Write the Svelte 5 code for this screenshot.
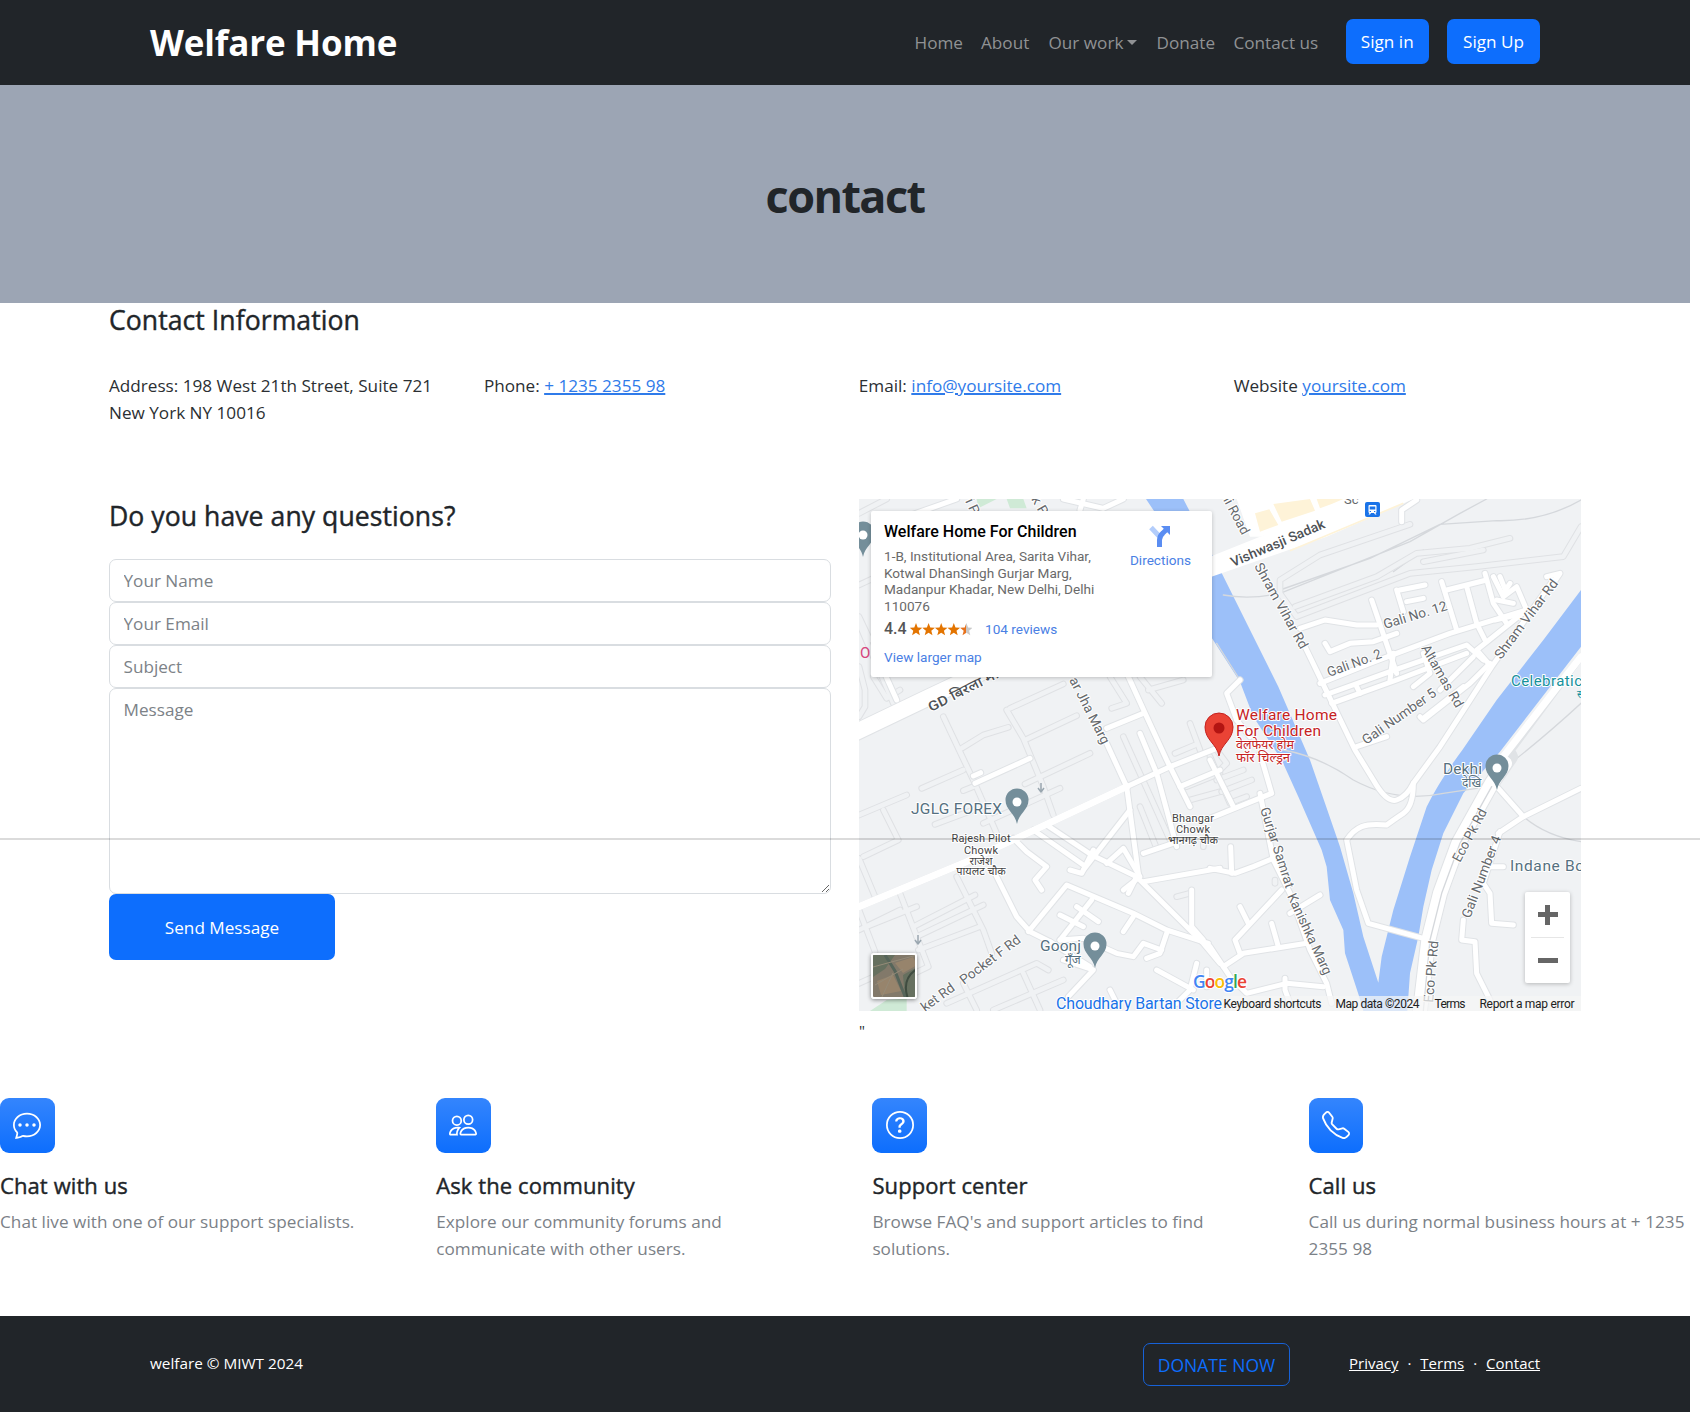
<script>
  const contacts = [
    { label: 'Address:', text: '198 West 21th Street, Suite 721 New York NY 10016' },
    { label: 'Phone:', link: '+ 1235 2355 98' },
    { label: 'Email:', link: 'info@yoursite.com' },
    { label: 'Website', link: 'yoursite.com' }
  ];

  const features = [
    {
      title: 'Chat with us',
      text: 'Chat live with one of our support specialists.',
      paths: [
        'M5 8a1 1 0 1 1-2 0 1 1 0 0 1 2 0zm4 0a1 1 0 1 1-2 0 1 1 0 0 1 2 0zm3 1a1 1 0 1 0 0-2 1 1 0 0 0 0 2z',
        'M2.165 15.803l.02-.004c1.83-.363 2.948-.842 3.468-1.105A9.06 9.06 0 0 0 8 15c4.418 0 8-3.134 8-7s-3.582-7-8-7-8 3.134-8 7c0 1.76.743 3.37 1.97 4.6a10.437 10.437 0 0 1-.524 2.318l-.003.011a10.722 10.722 0 0 1-.244.637c-.079.186.074.394.273.362a21.673 21.673 0 0 0 .693-.125zm.8-3.108a1 1 0 0 0-.287-.801C1.618 10.83 1 9.468 1 8c0-3.192 3.004-6 7-6s7 2.808 7 6c0 3.193-3.004 6-7 6a8.06 8.06 0 0 1-2.088-.272 1 1 0 0 0-.711.074c-.387.196-1.24.57-2.634.893a10.97 10.97 0 0 0 .398-2z'
      ]
    },
    {
      title: 'Ask the community',
      text: 'Explore our community forums and communicate with other users.',
      paths: [
        'M15 14s1 0 1-1-1-4-5-4-5 3-5 4 1 1 1 1h8zm-7.978-1A.261.261 0 0 1 7 12.996c.001-.264.167-1.03.76-1.72C8.312 10.629 9.282 10 11 10c1.717 0 2.687.63 3.24 1.276.593.69.758 1.457.76 1.72l-.008.002A.274.274 0 0 1 15 13H7.022zM11 7a2 2 0 1 0 0-4 2 2 0 0 0 0 4zm3-2a3 3 0 1 1-6 0 3 3 0 0 1 6 0zM6.936 9.28a5.88 5.88 0 0 0-1.23-.247A7.35 7.35 0 0 0 5 9c-4 0-5 3-5 4 0 .667.333 1 1 1h4.216A2.238 2.238 0 0 1 5 13c0-1.01.377-2.042 1.09-2.904.243-.294.526-.569.846-.816zM4.92 10A5.493 5.493 0 0 0 4 13H1c0-.26.164-1.03.76-1.724.545-.636 1.492-1.256 3.16-1.275zM1.5 5.5a3 3 0 1 1 6 0 3 3 0 0 1-6 0zm3-2a2 2 0 1 0 0 4 2 2 0 0 0 0-4z'
      ]
    },
    {
      title: 'Support center',
      text: "Browse FAQ's and support articles to find solutions.",
      paths: [
        'M8 15A7 7 0 1 1 8 1a7 7 0 0 1 0 14zm0 1A8 8 0 1 0 8 0a8 8 0 0 0 0 16z',
        'M5.255 5.786a.237.237 0 0 0 .241.247h.825c.138 0 .248-.113.266-.25.09-.656.54-1.134 1.342-1.134.686 0 1.314.343 1.314 1.168 0 .635-.374.927-.965 1.371-.673.489-1.206 1.06-1.168 1.987l.003.217a.25.25 0 0 0 .25.246h.811a.25.25 0 0 0 .25-.25v-.105c0-.718.273-.927 1.01-1.486.609-.463 1.244-.977 1.244-2.056 0-1.511-1.276-2.241-2.673-2.241-1.267 0-2.655.59-2.75 2.286zm1.557 5.763c0 .533.425.927 1.01.927.609 0 1.028-.394 1.028-.927 0-.552-.42-.94-1.029-.94-.584 0-1.009.388-1.009.94z'
      ]
    },
    {
      title: 'Call us',
      text: 'Call us during normal business hours at + 1235 2355 98',
      paths: [
        'M3.654 1.328a.678.678 0 0 0-1.015-.063L1.605 2.3c-.483.484-.661 1.169-.45 1.77a17.568 17.568 0 0 0 4.168 6.608 17.569 17.569 0 0 0 6.608 4.168c.601.211 1.286.033 1.77-.45l1.034-1.034a.678.678 0 0 0-.063-1.015l-2.307-1.794a.678.678 0 0 0-.58-.122l-2.19.547a1.745 1.745 0 0 1-1.657-.459L5.482 8.062a1.745 1.745 0 0 1-.46-1.657l.548-2.19a.678.678 0 0 0-.122-.58L3.654 1.328zM1.884.511a1.745 1.745 0 0 1 2.612.163L6.29 2.98c.329.423.445.974.315 1.494l-.547 2.19a.678.678 0 0 0 .178.643l2.457 2.457a.678.678 0 0 0 .644.178l2.189-.547a1.745 1.745 0 0 1 1.494.315l2.306 1.794c.829.645.905 1.87.163 2.611l-1.034 1.034c-.74.74-1.846 1.065-2.877.702a18.634 18.634 0 0 1-7.01-4.42 18.634 18.634 0 0 1-4.42-7.009c-.362-1.03-.037-2.137.703-2.877L1.885.511z'
      ]
    }
  ];

  // Map geometry is in thirds of a pixel; the west and east halves have their own origins.
  const west = 'translate(-9 -9) scale(.33333)';
  const east = 'translate(351 -9) scale(.33333)';

  const lanesWest = [
    'M27 70L110 27', 'M27 130L62 115', 'M27 285L70 265', 'M27 380L60 450', 'M27 400L130 640', 'M70 560L110 625L150 600', 'M27 530L45 600V650L27 680',
    'M280 680L370 870L440 1030', 'M335 775L400 735L475 712', 'M480 655L640 582', 'M470 660L520 745L580 890L610 975', 'M525 750L680 677',
    'M215 895L340 840', 'M340 902L370 890', 'M27 975L170 915', 'M100 960L145 1050L40 1100', 'M27 1105L75 1220', 'M255 1003L370 960', 'M400 1000L630 895', 'M525 882L720 790',
    'M785 655L830 640L780 560', 'M870 560L935 640', 'M895 600L1000 570', 'M1020 700L1050 780', 'M975 790L1035 765', 'M1010 890L1110 850', 'M1020 930L1110 905', 'M820 740L960 1050', 'M870 950L920 1075',
    'M150 1210L235 1430L130 1480', 'M27 1320L150 1260', 'M27 1260L75 1385', 'M50 1310L200 1250', 'M190 1310L375 1215', 'M200 1340L400 1245', 'M205 1380L390 1310', 'M320 1160L400 1320L425 1390', 'M27 1480L140 1430',
    'M290 1540L560 1420L595 1440', 'M430 1560L640 1470', 'M520 1450L570 1560', 'M340 1480L380 1560', 'M980 1220L1020 1210', 'M1060 1050V1070'
  ];
  const lanesEast = [
    'M600 103L330 195L210 270V310L260 380L600 250L800 230L1060 200L1113 110', 'M255 350L500 260L620 190L780 175L900 145', 'M640 215L820 180', 'M20 870L100 840', 'M35 905L125 870', 'M70 935L110 920', 'M0 800L60 940', 'M20 780L50 820L20 850', 'M195 1170V1180'
  ];
  const roadsWest = [
    'M27 1250L350 1115L500 1045L830 890L960 830L1100 775', 'M790 480L835 560L890 680L950 810L1020 950', 'M770 715L880 670', 'M770 760L830 890L865 1150', 'M700 1140L840 960',
    'M490 1045L530 1085L590 1130L555 1170L575 1200', 'M430 1140L500 1280L540 1325L600 1355', 'M550 1020L700 1125', 'M590 1005L725 1095L860 1160L1060 1360L1110 1420', 'M535 1325L650 1185L850 1270L950 1320L1075 1360',
    'M725 1230L630 1350', 'M680 1250L745 1295', 'M630 1275L700 1310', 'M850 1280L820 1325', 'M950 1330L930 1390L890 1405', 'M630 1350L700 1345L800 1390L850 1400L880 1360L935 1380', 'M880 1175L1110 1135', 'M1025 1200V1310L1060 1350',
    'M770 1120L820 1075L870 1160L820 1200', 'M860 1160L835 1210', 'M660 1140L695 1150L730 1080', 'M640 1410L730 1440L655 1520', 'M600 1355L720 1430', 'M880 1090L1000 1050', 'M920 1440L1030 1500', 'M780 1500L800 1540', 'M1040 1420L1020 1500L980 1540', 'M1070 1440V1490', 'M95 530L140 630', 'M320 27L27 130', 'M370 858L392 848', 'M540 805L375 880',
    'M640 27L760 55L820 27', 'M700 27L690 60', 'M990 890L1110 840', 'M870 730L920 850L980 1070'
  ];
  const roadsEast = [
    'M285 470L360 625L435 780L490 870Q530 940 560 930T610 880L690 770L845 530L1030 270', 'M610 880Q610 950 580 970T530 1005Q480 1000 455 1010T410 1050L440 1200L475 1300L640 1345',
    'M270 415L345 390L440 405L500 405', 'M485 330L560 550', 'M345 460L360 485L420 460L490 455L560 430', 'M560 300L580 365', 'M570 300L645 285', 'M590 335L640 325', 'M695 275L740 420', 'M710 300L830 270', 'M825 250L850 340L890 400', 'M770 290L800 400L825 450', 'M850 260L880 320L920 290L950 360L850 440L800 480L835 520',
    'M330 580L480 520L720 430L950 360', 'M345 615L540 545L770 465L820 510', 'M365 640L560 570L770 490', 'M440 590L450 610', 'M550 490L540 570', 'M860 330L910 340', 'M855 390L940 370', 'M870 260L890 310', 'M900 280L880 310', 'M640 490L660 550L610 590', 'M640 685L760 590', 'M440 770L530 740', 'M630 680L640 690L780 580L840 520', 'M690 600L790 500',
    'M1010 260L1050 250L1030 280', 'M575 95V60L620 30', 'M0 985L185 910L150 790', 'M0 810L70 950', 'M150 910L190 1110L240 1210L300 1380L350 1480L365 1540', 'M0 1135L75 1150L130 1130L190 1105', 'M62 1070L65 1150', 'M330 1215L240 1270', 'M90 1250L115 1300', 'M215 1200L75 1350L90 1390', 'M185 1300L205 1370', 'M40 1430L100 1390L290 1360', 'M0 1370L60 1460L110 1510L230 1480L340 1490', 'M225 1465V1500L240 1540',
    'M865 895L940 980', 'M865 1030L940 980L1113 895', 'M870 1025L820 1180L840 1210L845 1300L910 1305', 'M760 1290L755 1350L795 1355L800 1450L840 1530', 'M830 1130H880', 'M80 690L50 610L90 570', 'M80 690L120 740'
  ];

  // Street names: x, y, angle, rendered length, size
  const streets = [
    ['GD बिरला मार्ग', 72, 213, -27, 86, 13.5, 'major'],
    ['ar Jha Marg', 210, 181, 63, 73, 13.5, ''],
    ['Vishwasji Sadak', 374, 68, -23, 101, 13.5, 'major'],
    ['ni Road', 362, -3, 62, 45, 13.5, ''],
    ['Shram Vihar Rd', 395, 67, 61, 96, 13.5, ''],
    ['Shram Vihar Rd', 642, 161, -53, 96, 13.5, ''],
    ['Gali No. 12', 526, 130, -17, 66, 13.5, ''],
    ['Gali No. 2', 470, 178, -20, 57, 13.5, ''],
    ['Altamas Rd', 562, 149, 60, 70, 13.5, ''],
    ['Gali Number 5', 507, 246, -35, 87, 13.5, ''],
    ['Gurjar Samrat', 401, 310, 72, 84, 13.5, ''],
    ['Kanishka Marg', 428, 397, 65, 88, 13.5, ''],
    ['Eco Pk Rd', 601, 364, -62, 58, 13.5, ''],
    ['Eco Pk Rd', 574, 504, -85, 62, 13.5, ''],
    ['Gali Number 4', 611, 420, -69, 87, 13.5, ''],
    ['Pocket F Rd', 105, 486, -37, 72, 13.5, ''],
    ['ket Rd', 66, 513, -36, 38, 13.5, ''],
    ['i P', 106, 2, 65, 16, 13.5, ''],
    ['k R', 172, 0, 60, 20, 13.5, '']
  ];

  const pins = [[158, 299], [236, 443], [638, 265], [4, 32]];
</script>

<div class="page">
  <header class="navbar">
    <a class="brand" href="#home">Welfare Home</a>
    <nav class="links">
      <a href="#home">Home</a>
      <a href="#about">About</a>
      <a href="#work">Our work<i class="caret"></i></a>
      <a href="#donate">Donate</a>
      <a href="#contact">Contact us</a>
      <button class="btn">Sign in</button>
      <button class="btn">Sign Up</button>
    </nav>
  </header>

  <section class="hero"><h1>contact</h1></section>

  <main>
    <h2>Contact Information</h2>
    <div class="contacts">
      {#each contacts as c}
        <p>{c.label} {#if c.link}<a href="#contact">{c.link}</a>{:else}{c.text}{/if}</p>
      {/each}
    </div>

    <div class="split">
      <form class="form">
        <h2>Do you have any questions?</h2>
        <input placeholder="Your Name" />
        <input placeholder="Your Email" />
        <input placeholder="Subject" />
        <textarea placeholder="Message"></textarea>
        <button type="button" class="btn send">Send Message</button>
      </form>

      <div class="map-col">
        <div class="map">
          <svg class="canvas" viewBox="0 0 722 512" width="722" height="512">
            <rect width="722" height="512" fill="#f0f2f4" />
            <g transform={west}>
              <path fill="#cfead6" d="M380 27H440L385 55ZM470 27H520L530 55H480ZM60 1563L110 1530L170 1525V1563Z" />
            </g>
            <g transform={east}>
              <path fill="#9cc0f9" d="M-192 27H-80L38 255L125 430L205 590L300 810L345 940L390 1070L430 1210L460 1340L505 1478L515 1400L550 1260L600 1100L650 950Q690 870 757 780L860 630L1000 450L1113 300V470L870 785L760 910Q720 990 700 1030L665 1140L640 1250L625 1340L600 1450L592 1563H460L447 1518L405 1390L400 1320L360 1230L350 1130L335 1080L265 920L215 810L130 680L90 575L-10 420V262L-90 180Z" />
              <path class="rail" d="M40 315Q120 330 210 310L600 155L750 70L830 27M210 300L480 205L690 103L860 92Q1000 95 1113 30M550 245L640 180M220 780Q330 800 430 870Q560 940 700 910L800 895Q950 790 1113 640M940 980Q1010 1040 1113 1055M20 460L90 570" />
            </g>
            <g transform={west}>
              {#each lanesWest as d}<path class="lane-edge" {d} />{/each}
              {#each lanesWest as d}<path class="lane" {d} />{/each}
            </g>
            <g transform={east}>
              {#each lanesEast as d}<path class="lane-edge" {d} />{/each}
              {#each lanesEast as d}<path class="lane" {d} />{/each}
            </g>
            <g transform={west}>
              {#each roadsWest as d}<path class="road-edge" {d} />{/each}
              <path class="road-edge avenue-edge" d="M0 735L230 625L600 450" />
            </g>
            <g transform={east}>
              {#each roadsEast as d}<path class="road-edge" {d} />{/each}
              <path class="road-edge park-edge" d="M630 1563L655 1350L690 1210L745 1060L845 880L900 800" />
              <path class="road-edge" d="M890 800L1113 500" />
            </g>
            <g transform={west}>
              {#each roadsWest as d}<path class="road" {d} />{/each}
              <path class="road avenue" d="M0 735L230 625L600 450" />
              <path class="road trunk" d="M27 1250L350 1115L500 1045L830 890" />
            </g>
            <g transform={east}>
              {#each roadsEast as d}<path class="road" {d} />{/each}
              <path class="road park" d="M630 1563L655 1350L690 1210L745 1060L845 880L885 820" />
              <path class="road trunk" d="M880 800L1113 500" />
              <path class="rail" d="M640 1563L660 1350L695 1210L750 1060L845 890" />
              <path fill="#fff" d="M-60 230L0 200L150 140L420 27H610L350 140L0 262L-60 290Z" />
              <path fill="#fff" d="M80 27H420V60L150 140H120Z" />
              <path fill="#fef3d8" d="M135 70L178 58L205 105L150 125ZM190 42L300 27L315 62L215 95ZM320 27H400L365 42L330 55Z" />
              <path stroke="#fef3d8" stroke-width="5" d="M240 182L580 40" />
            </g>
            {#each streets as [name, x, y, angle, len, size, kind]}
              <text class="street {kind}" transform="translate({x} {y}) rotate({angle})" textLength={len} lengthAdjust="spacingAndGlyphs" font-size={size}>{name}</text>
            {/each}
            <text class="street" x="485" y="5" font-size="13">Sc</text>

            {#each pins as [x, y]}
              <g transform="translate({x} {y})">
                <path fill="#748e9a" d="M0 26C-2 15-11.500 12-11.500 2A11.500 11.500 0 0 1 11.500 2C11.500 12 2 15 0 26Z" />
                <circle cy="4" r="4.500" fill="#fff" />
              </g>
            {/each}
            <path d="M182 284v8m-3-3l3 4 3-4M59 436v8m-3-3l3 4 3-4" fill="none" stroke="#9aa7b0" stroke-width="1.500" />

            <g class="place">
              <text x="52" y="315" textLength="91" font-size="15.500">JGLG FOREX</text>
              <text x="181" y="452" textLength="41" font-size="15.500">Goonj</text>
              <text x="206" y="465" font-size="12">गूँज</text>
              <text x="584" y="275" textLength="39" font-size="15.500">Dekhi</text>
              <text x="603" y="288" font-size="12">देखि</text>
              <text x="651" y="372" textLength="74" font-size="15.500">Indane Bo</text>
            </g>
            <g class="junction">
              <text x="122" y="343" textLength="59">Rajesh Pilot</text>
              <text x="122" y="354.500" textLength="34">Chowk</text>
              <text x="122" y="365.500">राजेश</text>
              <text x="122" y="376">पायलट चौक</text>
              <text x="334" y="323" textLength="42">Bhangar</text>
              <text x="334" y="334" textLength="34">Chowk</text>
              <text x="334" y="345">भानगढ़ चौक</text>
            </g>
            <text x="652" y="187" fill="#15919b" font-size="15" textLength="71" class="halo">Celebratic</text>
            <text x="718" y="199" fill="#15919b" font-size="11">स</text>
            <text x="1" y="159" fill="#d8447c" font-size="15">O</text>
            <text x="197" y="509.500" fill="#1a73e8" font-size="16" textLength="166" class="halo">Choudhary Bartan Store</text>

            <g transform="translate(360 228)">
              <path fill="#ea4335" stroke="#c5221f" d="M0 29C-2 17-14 13-14 0A14 14 0 0 1 14 0C14 13 2 17 0 29Z" />
              <circle cy="1" r="5.500" fill="#b31412" />
            </g>
            <g class="target">
              <text x="377" y="221" textLength="101" font-size="15.500">Welfare Home</text>
              <text x="377" y="237" textLength="85" font-size="15.500">For Children</text>
              <text x="377" y="250" textLength="58" lengthAdjust="spacingAndGlyphs" font-size="12.500">वेलफेयर होम</text>
              <text x="377" y="263" textLength="54" lengthAdjust="spacingAndGlyphs" font-size="12.500">फॉर चिल्ड्रन</text>
            </g>

            <g transform="translate(506 3)">
              <rect width="15" height="15" rx="2" fill="#1a73e8" />
              <path fill="#fff" d="M4.500 3h6q1 0 1 1v6q0 1-1 1l1 1.500H10L9 11H6L5 12.500H3.500L4.500 11q-1 0-1-1V4q0-1 1-1Z" />
              <path fill="#1a73e8" d="M4.700 4.500h5.600v3H4.700ZM4.700 9H6v1H4.700ZM9 9h1.300v1H9Z" />
            </g>

            <rect x="364" y="497" width="358" height="15" fill="#f5f5f5" fill-opacity=".72" />
            <g class="legal">
              <text x="364.500" y="508.500" textLength="98">Keyboard shortcuts</text>
              <text x="476.500" y="508.500" textLength="84">Map data ©2024</text>
              <text x="575.500" y="508.500" textLength="31">Terms</text>
              <text x="620.500" y="508.500" textLength="95">Report a map error</text>
            </g>
            <text class="logo" x="334" y="489" textLength="54"><tspan fill="#4285f4">G</tspan><tspan fill="#ea4335">o</tspan><tspan fill="#fbbc04">o</tspan><tspan fill="#4285f4">g</tspan><tspan fill="#34a853">l</tspan><tspan fill="#ea4335">e</tspan></text>
          </svg>

          <div class="card">
            <div class="card-body">
              <strong>Welfare Home For Children</strong>
              <address>1-B, Institutional Area, Sarita Vihar,<br />Kotwal DhanSingh Gurjar Marg,<br />Madanpur Khadar, New Delhi, Delhi<br />110076</address>
              <div class="rating">
                <b>4.4</b>
                <svg width="62" height="13" viewBox="0 0 62 13">
                  <defs>
                    <linearGradient id="half"><stop offset=".5" stop-color="#e7711b" /><stop offset=".5" stop-color="#c9c9c9" /></linearGradient>
                  </defs>
                  {#each [0, 1, 2, 3, 4] as i}
                    <path transform="translate({i * 12.6} 0)" fill={i === 4 ? 'url(#half)' : '#e37400'} d="M6 0L7.700 4.500L12.300 4.700L8.700 7.700L9.900 12.300L6 9.700L2.100 12.300L3.300 7.700L-.3 4.700L4.300 4.500Z" />
                  {/each}
                </svg>
                <a href="#reviews">104 reviews</a>
              </div>
              <a class="larger" href="#map">View larger map</a>
            </div>
            <a class="directions" href="#directions">
              <svg width="22" height="22" viewBox="0 0 22 22">
                <path d="M2 2.500L10 11" stroke="#b3cdfb" stroke-width="5" />
                <path d="M10.500 22V15Q10.500 11 14 8L18 4" fill="none" stroke="#5a8df2" stroke-width="5" />
                <path d="M12 1H21V10Z" fill="#5a8df2" />
              </svg>
              Directions
            </a>
          </div>

          <div class="satellite">
            <svg width="44" height="44" viewBox="0 0 44 44">
              <rect width="44" height="44" fill="#82796a" />
              <path fill="#66705f" d="M0 0H22L12 14L0 22ZM30 20L44 12V44H32Z" />
              <path fill="#97846c" d="M22 8L40 2L44 10L30 18ZM4 26L20 20L28 36L8 40Z" />
              <path fill="none" stroke="#56655a" stroke-width="3" d="M12 0L22 16L33 44" />
              <path fill="none" stroke="#3f4c40" stroke-width="2" d="M44 14Q28 24 35 44" />
              <path fill="none" stroke="#958b78" d="M0 12L44 0M2 30L30 14M8 44L20 18" />
            </svg>
          </div>
          <div class="zoom"><i class="plus"></i><hr /><i class="minus"></i></div>
        </div>
        <span class="stray">"</span>
      </div>
    </div>
  </main>

  <section class="features">
    {#each features as f}
      <article>
        <div class="tile">
          <svg width="28" height="28" viewBox="0 0 16 16" fill="currentColor">
            {#each f.paths as d}<path {d} />{/each}
          </svg>
        </div>
        <h3>{f.title}</h3>
        <p>{f.text}</p>
      </article>
    {/each}
  </section>

  <footer>
    <span class="copy">welfare © MIWT 2024</span>
    <button class="donate">DONATE NOW</button>
    <div class="legal-links">
      <a href="#privacy">Privacy</a><span>·</span><a href="#terms">Terms</a><span>·</span><a href="#contact">Contact</a>
    </div>
  </footer>
</div>
<div class="divider"></div>

<style>
  :global(body) {
    margin: 0;
    background: #fff;
    overflow: hidden;
  }
  .page,
  .page * {
    box-sizing: border-box;
  }
  .page {
    width: 1690px;
    height: 1412px;
    display: flex;
    flex-direction: column;
    color: #2b2f33;
    font: 400 17.150px/27.3px 'Open Sans', 'Noto Sans', sans-serif;
  }
  h1, h2, h3, p, address {
    margin: 0;
  }
  a {
    color: inherit;
  }
  .navbar {
    height: 84.5px;
    flex: none;
    padding: 0 150px;
    background: #212529;
    display: flex;
    justify-content: space-between;
    align-items: center;
  }
  .brand {
    color: #fff;
    font-size: 35px;
    font-weight: 700;
    line-height: 50px;
    letter-spacing: -0.15px;
    padding-top: 2px;
    text-decoration: none;
  }
  .links {
    display: grid;
    grid-template-columns: 66.5px 67.5px 108px 77px 112px 101.500px 93px;
    align-items: center;
    color: #909294;
  }
  .links a {
    text-decoration: none;
    white-space: nowrap;
  }
  .caret {
    display: inline-block;
    margin-left: 4px;
    vertical-align: 4px;
    border: 5.500px solid transparent;
    border-top-color: currentColor;
    border-bottom: 0;
  }
  .btn {
    width: 83.5px;
    height: 45px;
    padding: 0;
    border: 0;
    border-radius: 7px;
    background: #0d6efd;
    color: #fff;
    font: inherit;
  }
  .links .btn {
    margin-top: -2px;
  }
  .links .btn:last-child {
    width: 93px;
  }
  .hero {
    height: 218px;
    flex: none;
    background: #9ca5b4;
    display: flex;
    align-items: center;
    justify-content: center;
  }
  h1 {
    color: #212529;
    font-size: 45px;
    line-height: 60px;
    padding-top: 4px;
    letter-spacing: -1.600px;
  }
  main {
    padding: 0 109px;
    height: 780px;
    flex: none;
  }
  h2,
  h3 {
    color: #212529;
    font-weight: 500;
    -webkit-text-stroke: 0.4px currentColor;
  }
  h2 {
    font-size: 26.600px;
    line-height: 34px;
    letter-spacing: 0.05px;
  }
  .contacts {
    display: grid;
    grid-template-columns: repeat(4, 347px);
    column-gap: 27.9px;
    margin-top: 35px;
  }
  .contacts a {
    color: #2f7bea;
    text-decoration-thickness: 1.500px;
  }
  .split {
    display: grid;
    grid-template-columns: 722px 722px;
    column-gap: 28px;
    margin-top: 73px;
  }
  .form {
    display: flex;
    flex-direction: column;
  }
  .form h2 {
    margin-bottom: 26.300px;
  }
  input,
  textarea {
    height: 42.8px;
    border: 1px solid #d9dde1;
    border-radius: 7px;
    padding: 7px 13.500px;
    font: inherit;
    background: #fff;
  }
  input::placeholder,
  textarea::placeholder {
    color: #7c8287;
  }
  textarea {
    height: 206px;
    resize: vertical;
  }
  .send {
    width: 226px;
    height: 66px;
    padding-top: 2px;
  }
  .map {
    position: relative;
    height: 512px;
    overflow: hidden;
    font-family: Roboto, sans-serif;
  }
  .canvas {
    display: block;
    font-family: Roboto, 'Noto Sans', sans-serif;
  }
  .canvas path {
    stroke-linejoin: round;
  }
  .lane-edge, .lane, .road-edge, .road, .rail {
    fill: none;
    stroke-linecap: round;
  }
  .lane-edge { stroke: #dfe1e4; stroke-width: 20; }
  .lane { stroke: #f0f2f4; stroke-width: 14; }
  .road-edge { stroke: #e0e3e6; stroke-width: 21; }
  .road { stroke: #fff; stroke-width: 15; }
  .avenue-edge { stroke-width: 54; }
  .avenue { stroke-width: 48; }
  .park-edge { stroke-width: 48; }
  .park { stroke-width: 42; }
  .trunk { stroke-width: 21; }
  .rail { stroke: #d5d8dc; stroke-width: 4; }
  .street, .place, .junction, .target, .legal, .halo {
    paint-order: stroke;
    stroke: #fff;
    stroke-width: 2px;
    stroke-linejoin: round;
  }
  .street { fill: #65696d; }
  .major { fill: #4d5155; font-weight: 500; }
  .place { fill: #557080; }
  .junction { fill: #444; font-size: 11px; text-anchor: middle; }
  .target { fill: #c5221f; }
  .legal { fill: #222; font-size: 12px; stroke: none; }
  .logo {
    font: 600 17.500px 'Open Sans', sans-serif;
    paint-order: stroke;
    stroke: #fff;
    stroke-width: 2px;
  }
  .card {
    position: absolute;
    left: 12px;
    top: 12px;
    width: 341px;
    height: 166px;
    padding: 10px 13px;
    background: #fff;
    border-radius: 2px;
    box-shadow: 0 1px 4px rgba(0, 0, 0, 0.22);
    display: flex;
    justify-content: space-between;
    font-size: 13.600px;
    line-height: 16.500px;
    color: #6a6a6a;
    white-space: nowrap;
  }
  .card a {
    color: #4a80e4;
    text-decoration: none;
  }
  .card strong {
    display: block;
    color: #000;
    font-size: 16px;
    font-weight: 500;
    line-height: 22px;
    margin-bottom: 5px;
  }
  address {
    font-style: normal;
  }
  .rating {
    display: flex;
    align-items: center;
    height: 20px;
    margin-top: 5px;
  }
  .rating b {
    color: #555;
    font-size: 16px;
    font-weight: 500;
    width: 26px;
  }
  .rating a {
    margin-left: 13px;
  }
  .larger {
    display: block;
    margin-top: 9.500px;
  }
  .directions {
    display: flex;
    flex-direction: column;
    align-items: center;
    gap: 5px;
    padding-top: 4px;
    margin-right: 8px;
  }
  .satellite {
    position: absolute;
    left: 12px;
    bottom: 12.500px;
    width: 46px;
    height: 46px;
    border: 2px solid #fff;
    border-radius: 3px;
    overflow: hidden;
    box-shadow: 0 1px 4px rgba(0, 0, 0, 0.45);
  }
  .zoom {
    position: absolute;
    left: 666px;
    top: 393px;
    width: 45px;
    height: 91px;
    border-radius: 2px;
    background: #fff;
    box-shadow: 0 1px 4px rgba(0, 0, 0, 0.25);
    display: grid;
    grid-template-rows: 45px 1px 45px;
    place-items: center;
  }
  .zoom hr {
    width: 33px;
    height: 1px;
    margin: 0;
    border: 0;
    background: #e6e6e6;
  }
  .plus, .minus {
    width: 20px;
    height: 20px;
    background: linear-gradient(#666, #666) center / 20px 5px no-repeat;
  }
  .plus {
    background: linear-gradient(#666, #666) center / 20px 5px no-repeat, linear-gradient(#666, #666) center / 5px 20px no-repeat;
  }
  .stray {
    display: block;
    padding-top: 6px;
    font-size: 15px;
  }
  .features {
    display: grid;
    grid-template-columns: repeat(4, 382px);
    column-gap: 54.200px;
    height: 233.500px;
    flex: none;
    padding-top: 15.500px;
  }
  .tile {
    width: 54.500px;
    height: 54.500px;
    border-radius: 9px;
    color: #fff;
    background: linear-gradient(#3485fd, #0d6efd);
    display: grid;
    place-items: center;
  }
  .features h3 {
    margin-top: 17px;
    font-size: 22px;
    line-height: 30px;
    letter-spacing: 0.1px;
  }
  .features p {
    margin-top: 8px;
    color: #7b8187;
    letter-spacing: 0.04px;
  }
  footer {
    height: 96px;
    flex: 1;
    padding: 0 150px;
    background: #212529;
    color: #fff;
    font-size: 15.300px;
    display: flex;
    align-items: center;
  }
  .copy {
    margin-right: auto;
  }
  .donate {
    width: 147px;
    height: 43px;
    margin-right: 59px;
    padding: 2px 0 0;
    border: 1px solid #1762d8;
    border-radius: 7px;
    background: none;
    color: #0d6efd;
    font: 400 17.500px 'Open Sans', sans-serif;
  }
  .legal-links {
    width: 191px;
    font-size: 15px;
    display: flex;
    justify-content: space-between;
  }
  .divider {
    position: absolute;
    left: 0;
    top: 838px;
    width: 1700px;
    height: 2px;
    background: rgba(0, 0, 0, 0.14);
  }
</style>
